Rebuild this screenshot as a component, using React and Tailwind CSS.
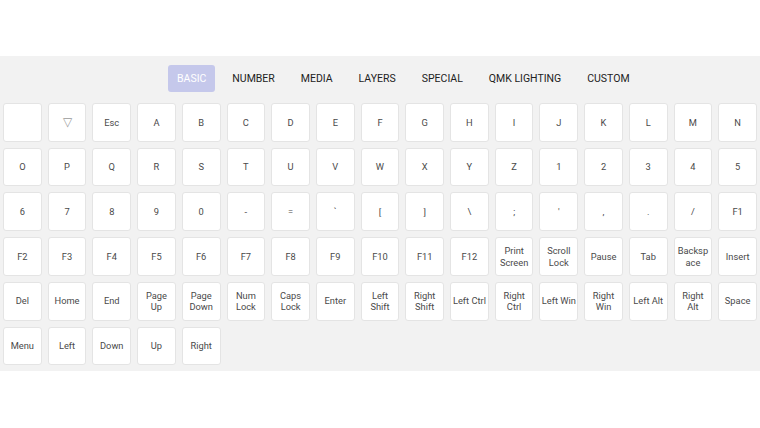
import React, { useState } from "react";

const TABS = ["Basic", "Number", "Media", "Layers", "Special", "QMK Lighting", "Custom"];

const KEYS = [
  "", "▽", "Esc", "A", "B", "C", "D", "E", "F", "G", "H", "I", "J", "K", "L", "M", "N",
  "O", "P", "Q", "R", "S", "T", "U", "V", "W", "X", "Y", "Z", "1", "2", "3", "4", "5",
  "6", "7", "8", "9", "0", "-", "=", "`", "[", "]", "\\", ";", "'", ",", ".", "/", "F1",
  "F2", "F3", "F4", "F5", "F6", "F7", "F8", "F9", "F10", "F11", "F12", "Print Screen", "Scroll Lock", "Pause", "Tab", "Backspace", "Insert",
  "Del", "Home", "End", "Page Up", "Page Down", "Num Lock", "Caps Lock", "Enter", "Left Shift", "Right Shift", "Left Ctrl", "Right Ctrl", "Left Win", "Right Win", "Left Alt", "Right Alt", "Space",
  "Menu", "Left", "Down", "Up", "Right",
];

// labels that stay on one line in the original
const ONE_LINE = ["Left Win", "Left Ctrl", "Left Alt"];

function Key({ label }) {
  const trans = label === "▽";
  return (
    <button
      className={
        "aspect-square bg-white border border-[#e4e4e4] rounded-[3px] flex items-center justify-center text-center text-[9.3px] leading-[11.6px] [overflow-wrap:anywhere] " +
        (trans ? "text-[#9a9a9a] text-[12px]" : "text-[#4a4a4a]")
      }
    >
      <span className={ONE_LINE.includes(label) ? "whitespace-nowrap" : "max-w-[34px]"}>{label}</span>
    </button>
  );
}

export default function App() {
  const [tab, setTab] = useState("Basic");
  return (
    <div className="w-[760px] h-[428px] pt-[56px] bg-white font-['Roboto',sans-serif]">
      <div className="bg-[#f2f2f2] pt-[9px] pb-[6px]">
        <div className="flex items-center gap-[8px] pl-[168px]">
          {TABS.map((t) => (
            <button
              key={t}
              onClick={() => setTab(t)}
              className={
                "h-[27px] px-[9px] rounded-[3px] uppercase text-[10.5px] font-normal " +
                (tab === t ? "bg-[#c5c8eb] text-white" : "text-[#222]")
              }
            >
              {t}
            </button>
          ))}
        </div>
        <div className="mt-[11px] px-[3px] grid grid-cols-[repeat(17,minmax(0,1fr))] gap-[6px]">
          {KEYS.map((k, i) => (
            <Key key={i} label={k} />
          ))}
        </div>
      </div>
    </div>
  );
}
